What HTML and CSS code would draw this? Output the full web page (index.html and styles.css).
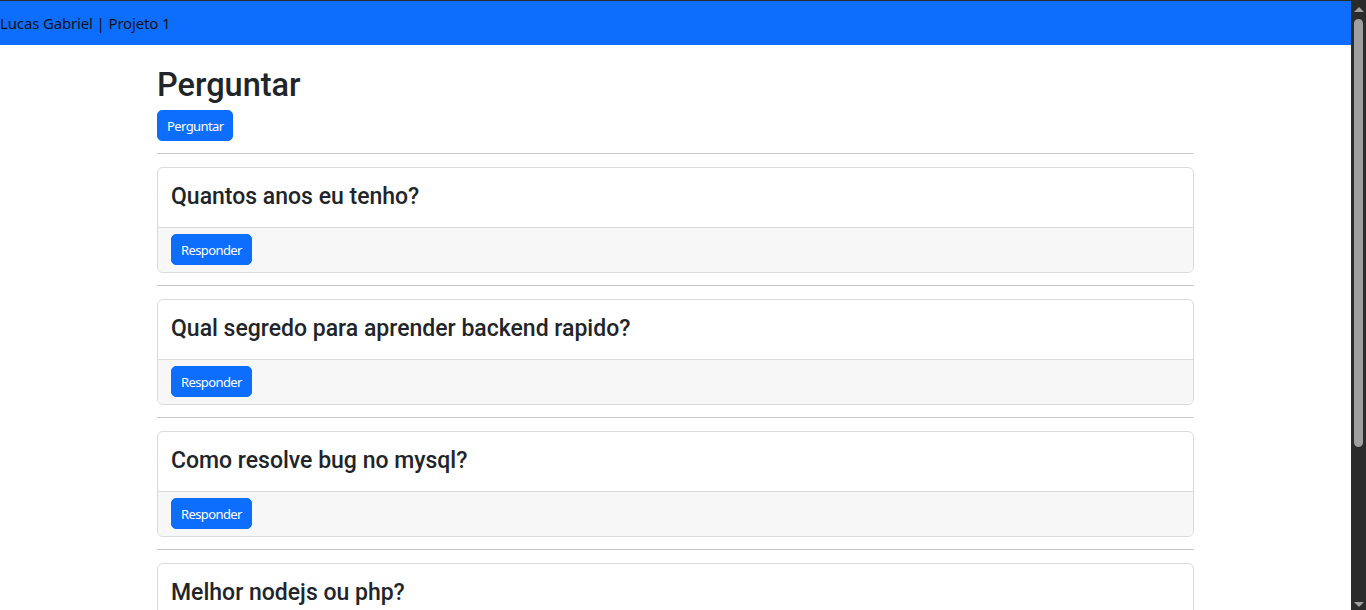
FILE: index.html
```html
<!DOCTYPE html>
<html lang="pt">
<head>
<meta charset="utf-8">
<title>Projeto 1</title>
<link rel="stylesheet" href="styles.css">
</head>
<body>
<div class="window">
  <div class="page">
    <nav class="navbar">Lucas Gabriel | Projeto 1</nav>
    <main class="container">
      <h2 class="title">Perguntar</h2>
      <button class="btn">Perguntar</button>
      <hr class="sep">
      <div class="card">
        <div class="card-body"><h4 class="question">Quantos anos eu tenho?</h4></div>
        <div class="card-footer"><button class="btn">Responder</button></div>
      </div>
      <hr class="sep">
      <div class="card">
        <div class="card-body"><h4 class="question">Qual segredo para aprender backend rapido?</h4></div>
        <div class="card-footer"><button class="btn">Responder</button></div>
      </div>
      <hr class="sep">
      <div class="card">
        <div class="card-body"><h4 class="question">Como resolve bug no mysql?</h4></div>
        <div class="card-footer"><button class="btn">Responder</button></div>
      </div>
      <hr class="sep">
      <div class="card">
        <div class="card-body"><h4 class="question">Melhor nodejs ou php?</h4></div>
        <div class="card-footer"><button class="btn">Responder</button></div>
      </div>
    </main>
  </div>
  <div class="scrollbar">
    <div class="arrow arrow-up"></div>
    <div class="track"><div class="thumb"></div></div>
    <div class="arrow arrow-down"></div>
  </div>
</div>
</body>
</html>
```
FILE: styles.css
```css
* { box-sizing: border-box; }
html, body { margin: 0; height: 100%; overflow: hidden; }
body {
  font-family: "Noto Sans", "Open Sans", sans-serif;
  color: #212529;
  background: #fff;
}
.window {
  display: flex;
  height: 100%;
  border-top: 1px solid #2b2b2b;
}
.page {
  flex: 1;
  overflow: hidden;
}
.navbar {
  height: 44px;
  line-height: 44px;
  background: #0d6efd;
  color: #111;
  font-size: 15px;
  letter-spacing: -0.15px;
}
.container {
  width: 1037px;
  margin: 0 auto;
  padding-top: 17px;
}
.title {
  margin: 0 0 1px;
  font-family: Roboto, "Noto Sans", sans-serif;
  font-size: 32.5px;
  line-height: 47px;
  font-weight: 500;
}
.btn {
  display: inline-block;
  height: 31px;
  padding: 0 9px;
  border: 1px solid #0d6efd;
  background: #0d6efd;
  color: #fff;
  font-family: inherit;
  font-size: 13px;
  letter-spacing: -0.6px;
  border-radius: 5px;
}
.sep {
  border: 0;
  border-top: 1px solid #c9cacb;
  margin: 12px 0 13px;
}
.card {
  border: 1px solid #d9dadb;
  border-radius: 6px;
  overflow: hidden;
}
.card-body {
  height: 59px;
  padding: 0 13px 3px;
  display: flex;
  align-items: center;
}
.question {
  margin: 0;
  font-family: Roboto, "Noto Sans", sans-serif;
  font-size: 23px;
  line-height: 29px;
  font-weight: 500;
}
.card-footer {
  border-top: 1px solid #d9dadb;
  background: #f7f7f7;
  padding: 6px 13px 7px;
  height: 45px;
}
.scrollbar {
  width: 15px;
  flex: none;
  background: #2b2b2b;
  display: flex;
  flex-direction: column;
  align-items: center;
}
.arrow {
  width: 0;
  height: 0;
  border-left: 5px solid transparent;
  border-right: 5px solid transparent;
  flex: none;
}
.arrow-up {
  margin-top: 6px;
  border-bottom: 5px solid #9f9f9f;
}
.arrow-down {
  margin-bottom: 3px;
  border-top: 5px solid #9f9f9f;
}
.track {
  flex: 1;
  width: 100%;
  display: flex;
  justify-content: center;
  padding-top: 7px;
}
.thumb {
  width: 9px;
  height: 428px;
  background: #9f9f9f;
  border-radius: 5px;
}
```
